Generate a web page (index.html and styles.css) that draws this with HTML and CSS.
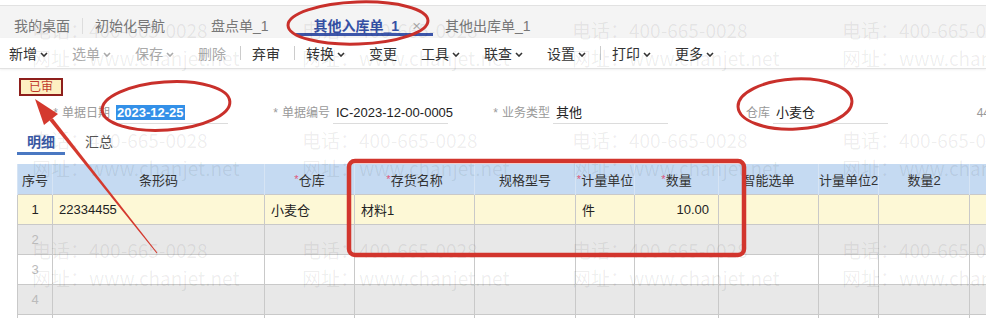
FILE: index.html
```html
<!DOCTYPE html>
<html lang="zh-CN">
  <head>
    <meta charset="UTF-8" />
    <meta name="viewport" content="width=device-width, initial-scale=1.0" />
    <title>其他入库单</title>
    <link rel="stylesheet" href="styles.css">
  </head>
  <body>
    <div class="page">
      <div class="tabbar">
        <div class="tab">我的桌面</div>
        <span class="tab-sep"></span>
        <div class="tab">初始化导航</div>
        <div class="tab">盘点单_1</div>
        <div class="tab tab-active">其他入库单_1<span class="tab-close">×</span></div>
        <div class="tab">其他出库单_1</div>
      </div>

      <div class="toolbar">
        <div class="tb-item">新增<svg class="chev" viewBox="0 0 8 5"><path d="M1 1l3 3 3-3"/></svg></div>
        <div class="tb-item is-off">选单<svg class="chev" viewBox="0 0 8 5"><path d="M1 1l3 3 3-3"/></svg></div>
        <div class="tb-item is-off">保存<svg class="chev" viewBox="0 0 8 5"><path d="M1 1l3 3 3-3"/></svg></div>
        <div class="tb-item is-off">删除</div>
        <span class="tb-sep"></span>
        <div class="tb-item">弃审</div>
        <span class="tb-sep"></span>
        <div class="tb-item">转换<svg class="chev" viewBox="0 0 8 5"><path d="M1 1l3 3 3-3"/></svg></div>
        <div class="tb-item">变更</div>
        <div class="tb-item">工具<svg class="chev" viewBox="0 0 8 5"><path d="M1 1l3 3 3-3"/></svg></div>
        <div class="tb-item">联查<svg class="chev" viewBox="0 0 8 5"><path d="M1 1l3 3 3-3"/></svg></div>
        <div class="tb-item">设置<svg class="chev" viewBox="0 0 8 5"><path d="M1 1l3 3 3-3"/></svg></div>
        <span class="tb-sep"></span>
        <div class="tb-item">打印<svg class="chev" viewBox="0 0 8 5"><path d="M1 1l3 3 3-3"/></svg></div>
        <div class="tb-item">更多<svg class="chev" viewBox="0 0 8 5"><path d="M1 1l3 3 3-3"/></svg></div>
      </div>

      <div class="form">
        <div class="status"><span class="badge">已审</span></div>
        <div class="fields">
          <div class="field">
            <label class="field-label"><i class="req">*</i>单据日期</label>
            <div class="field-input"><span class="sel">2023-12-25</span></div>
          </div>
          <div class="field">
            <label class="field-label"><i class="req">*</i>单据编号</label>
            <div class="field-input">IC-2023-12-00-0005</div>
          </div>
          <div class="field">
            <label class="field-label"><i class="req">*</i>业务类型</label>
            <div class="field-input">其他</div>
          </div>
          <div class="field">
            <label class="field-label">仓库</label>
            <div class="field-input">小麦仓</div>
          </div>
          <div class="field">
            <label class="field-label">44</label>
          </div>
        </div>
      </div>

      <div class="subtabs">
        <div class="subtab subtab-active">明细</div>
        <div class="subtab">汇总</div>
      </div>

      <table class="grid">
        <colgroup>
          <col style="width:35px"><col style="width:212px"><col style="width:90px"><col style="width:120px">
          <col style="width:101px"><col style="width:59px"><col style="width:84px"><col style="width:100px">
          <col style="width:60px"><col style="width:91px"><col style="width:100px">
        </colgroup>
        <thead>
          <tr>
            <th>序号</th>
            <th>条形码</th>
            <th><i class="req-red">*</i>仓库</th>
            <th><i class="req-red">*</i>存货名称</th>
            <th>规格型号</th>
            <th><i class="req-red">*</i>计量单位</th>
            <th><i class="req-red">*</i>数量</th>
            <th>智能选单</th>
            <th>计量单位2</th>
            <th>数量2</th>
            <th></th>
          </tr>
        </thead>
        <tbody>
          <tr class="row-current">
            <td class="num">1</td><td>22334455</td><td>小麦仓</td><td>材料1</td><td></td>
            <td>件</td><td class="qty">10.00</td><td></td><td></td><td></td><td></td>
          </tr>
          <tr class="row-gray">
            <td class="num">2</td><td></td><td></td><td></td><td></td><td></td><td></td><td></td><td></td><td></td><td></td>
          </tr>
          <tr>
            <td class="num">3</td><td></td><td></td><td></td><td></td><td></td><td></td><td></td><td></td><td></td><td></td>
          </tr>
          <tr class="row-gray">
            <td class="num">4</td><td></td><td></td><td></td><td></td><td></td><td></td><td></td><td></td><td></td><td></td>
          </tr>
          <tr>
            <td class="num"></td><td></td><td></td><td></td><td></td><td></td><td></td><td></td><td></td><td></td><td></td>
          </tr>
        </tbody>
      </table>

      <div class="watermark">
        <div class="wm"><span>电话：400-665-0028</span><span>网址：www.chanjet.net</span></div>
        <div class="wm"><span>电话：400-665-0028</span><span>网址：www.chanjet.net</span></div>
        <div class="wm"><span>电话：400-665-0028</span><span>网址：www.chanjet.net</span></div>
        <div class="wm"><span>电话：400-665-0028</span><span>网址：www.chanjet.net</span></div>
        <div class="wm"><span>电话：400-665-0028</span><span>网址：www.chanjet.net</span></div>
        <div class="wm"><span>电话：400-665-0028</span><span>网址：www.chanjet.net</span></div>
        <div class="wm"><span>电话：400-665-0028</span><span>网址：www.chanjet.net</span></div>
        <div class="wm"><span>电话：400-665-0028</span><span>网址：www.chanjet.net</span></div>
        <div class="wm"><span>电话：400-665-0028</span><span>网址：www.chanjet.net</span></div>
        <div class="wm"><span>电话：400-665-0028</span><span>网址：www.chanjet.net</span></div>
        <div class="wm"><span>电话：400-665-0028</span><span>网址：www.chanjet.net</span></div>
        <div class="wm"><span>电话：400-665-0028</span><span>网址：www.chanjet.net</span></div>
      </div>

      <!-- red marks drawn over the screen -->
      <svg class="marks" width="986" height="318" viewBox="0 0 986 318">
        <g fill="none" stroke="#c9302b" stroke-width="3">
          <ellipse cx="358" cy="23" rx="70" ry="21" transform="rotate(-2 358 23)"/>
          <ellipse cx="166" cy="106" rx="64" ry="24" transform="rotate(-4 166 106)"/>
          <ellipse cx="795" cy="104" rx="57" ry="25" transform="rotate(-3 795 104)"/>
        </g>
        <rect x="349" y="161" width="395" height="94" rx="6" fill="none" stroke="#d2352d" stroke-width="4.5"/>
        <g fill="#d4392e">
          <polygon points="35,99 44,125 58,114"/>
          <polygon points="49.5,120.6 52.7,118.2 157.4,252.7 156.6,253.3"/>
        </g>
      </svg>
    </div>
  </body>
</html>
```

FILE: styles.css
```css
body {
  margin: 0;
  background: #fff;
  font-family: "Liberation Sans", "Noto Sans CJK SC", sans-serif;
  color: #333;
}
.page {
  position: relative;
  width: 986px;
  height: 318px;
  overflow: hidden;
}

/* top tabs */
.tabbar {
  margin-top: 5px;
  height: 32px;
  border-top: 1px solid #e2e2e2;
  background: #f4f4f4;
  display: flex;
  padding-left: 2px;
  font-size: 14px;
  color: #777;
}
.tab {
  position: relative;
  display: flex;
  align-items: flex-start;
  padding: 10px 12px 0;
  line-height: 20px;
  white-space: nowrap;
}
.tab + .tab {
  margin-left: 22px;
}
.tab + .tab-active {
  margin-left: 15px;
  padding-left: 18px;
}
.tab-active + .tab {
  margin-left: 0;
}
.tab-active {
  color: #3550a5;
  font-weight: bold;
}
.tab-active::after {
  content: "";
  position: absolute;
  left: 0;
  right: 0;
  bottom: 2px;
  height: 3px;
  background: #3d56aa;
}
.tab-close {
  margin-left: 13px;
  font-weight: normal;
  color: #aaa;
  font-size: 15px;
}
.tab-sep {
  width: 1px;
  height: 16px;
  margin-top: 12px;
  background: #ddd;
}

/* toolbar */
.toolbar {
  height: 30px;
  display: flex;
  align-items: center;
  padding-left: 9px;
  border-bottom: 1px solid #e2e2e2;
  box-shadow: 0 1px 2px rgba(0, 0, 0, 0.06);
  font-size: 14px;
  color: #333;
}
.tb-item {
  display: flex;
  align-items: center;
  margin-right: 24px;
  white-space: nowrap;
}
.tb-item.is-off {
  color: #aaa;
}
.chev {
  width: 8px;
  height: 5px;
  margin-left: 3px;
  margin-top: 2px;
  fill: none;
  stroke: currentColor;
  stroke-width: 1.6;
}
.tb-sep {
  width: 1px;
  height: 14px;
  margin: 0 11px 0 -10px;
  background: #ccc;
}

/* header form */
.status {
  padding: 8px 0 0 19px;
  height: 17px;
}
.badge {
  display: inline-block;
  box-sizing: border-box;
  height: 18px;
  padding: 0 8px;
  border: 2px solid #8e1f1c;
  background: #fdf0c2;
  color: #c0392b;
  font-size: 12px;
  line-height: 14px;
}
.fields {
  display: flex;
  padding-left: 50px;
  margin-top: 8px;
  white-space: nowrap;
}
.field {
  display: flex;
  flex: none;
  width: 220px;
}
.field-label {
  width: 60px;
  text-align: right;
  color: #999;
  font-size: 12px;
  line-height: 22px;
}
.req {
  font-style: normal;
  margin-right: 4px;
}
.field-input {
  box-sizing: border-box;
  margin-left: 3px;
  width: 115px;
  height: 22px;
  padding-left: 3px;
  border-bottom: 1px solid #dcdcdc;
  font-size: 13px;
  line-height: 21px;
  color: #222;
}
.sel {
  background: #3390e8;
  color: #fff;
  font-weight: bold;
  padding: 0 1px;
}

/* detail / summary */
.subtabs {
  display: flex;
  padding-left: 17px;
  margin-top: 6px;
  font-size: 14px;
  font-family: "Noto Sans CJK SC", sans-serif;
}
.subtab {
  padding: 0 10px;
  height: 25px;
  line-height: 22px;
  color: #555;
  box-sizing: border-box;
}
.subtab + .subtab {
  margin-left: 10px;
}
.subtab-active {
  color: #3a5aa6;
  font-weight: bold;
  border-bottom: 3px solid #4a78c2;
}

/* grid */
.grid {
  margin: 9px 0 0 17px;
  border-collapse: collapse;
  table-layout: fixed;
  width: 1052px;
  font-size: 13px;
}
.grid th {
  height: 30px;
  padding: 0;
  background: #c5daf2;
  border-left: 1px solid #d6e4f4;
  font-weight: normal;
  color: #333;
  white-space: nowrap;
}
.grid td {
  height: 29px;
  padding: 0 6px;
  border: 1px solid #c9c9c9;
  white-space: nowrap;
  color: #222;
}
.grid tbody tr + tr td {
  height: 29px;
}
.req-red {
  font-style: normal;
  color: #e0577a;
  font-size: 11px;
  vertical-align: 2px;
}
.row-current td {
  background: #fdf8d6;
}
.row-gray td {
  background: #e8e8e8;
}
.grid td.num {
  text-align: center;
  padding: 0;
  color: #bbb;
}
.row-current td.num {
  color: #222;
}
.grid td.qty {
  text-align: right;
  padding-right: 9px;
}

/* watermark and marks on top */
.watermark {
  position: absolute;
  top: 0;
  left: 0;
  right: 0;
  bottom: 0;
  display: grid;
  grid-template-columns: repeat(4, 270px);
  grid-auto-rows: 110px;
  padding: 16px 0 0 32px;
  pointer-events: none;
  font-family: "Noto Sans CJK SC", sans-serif;
  font-size: 19px;
  color: rgba(0, 0, 0, 0.07);
}
.wm {
  display: flex;
  flex-direction: column;
  line-height: 28px;
  white-space: nowrap;
}
.marks {
  position: absolute;
  top: 0;
  left: 0;
  pointer-events: none;
}
```
